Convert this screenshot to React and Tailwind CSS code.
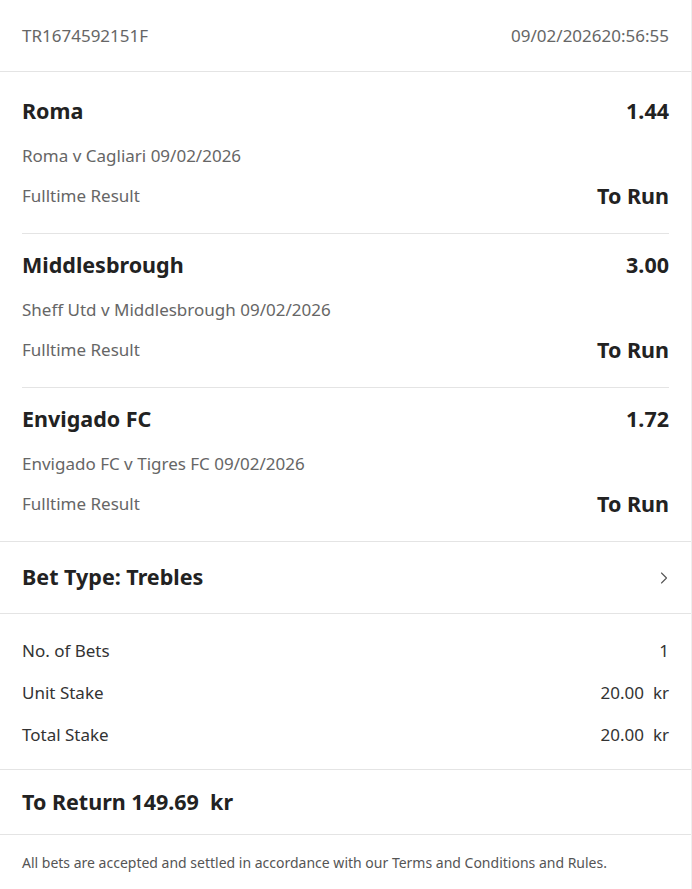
import { ChevronRight } from "lucide-react";

const legs = [
  { team: "Roma", odds: "1.44", event: "Roma v Cagliari 09/02/2026", market: "Fulltime Result", status: "To Run" },
  { team: "Middlesbrough", odds: "3.00", event: "Sheff Utd v Middlesbrough 09/02/2026", market: "Fulltime Result", status: "To Run" },
  { team: "Envigado FC", odds: "1.72", event: "Envigado FC v Tigres FC 09/02/2026", market: "Fulltime Result", status: "To Run" },
];

const stakes = [
  { label: "No. of Bets", value: "1" },
  { label: "Unit Stake", value: "20.00\u00a0 kr" },
  { label: "Total Stake", value: "20.00\u00a0 kr" },
];

export default function App() {
  return (
    <div className="min-h-screen bg-white text-[#222] font-['Noto_Sans',sans-serif] border-r border-[#eee]">
      {/* Header */}
      <div className="flex justify-between items-center h-[72px] px-[22px] border-b border-[#e4e4e4] text-[17px] text-[#666]">
        <span>TR1674592151F</span>
        <span>09/02/202620:56:55</span>
      </div>

      {/* Selections */}
      <div className="px-[22px]">
        {legs.map((l, i) => (
          <div key={l.team} className={`${i === 0 ? "pt-[22px]" : "pt-[14px]"} pb-[17px] ${i < legs.length - 1 ? "border-b border-[#e4e4e4]" : ""}`}>
            <div className="flex justify-between items-center h-[34px] text-[21.5px] font-bold">
              <span>{l.team}</span>
              <span>{l.odds}</span>
            </div>
            <div className="h-[40px] flex items-center mt-[8px] text-[17px] text-[#666]">{l.event}</div>
            <div className="flex justify-between items-center h-[40px] text-[17px]">
              <span className="text-[#666]">{l.market}</span>
              <span className="text-[21.5px] font-bold text-[#222]">{l.status}</span>
            </div>
          </div>
        ))}
      </div>

      {/* Bet type */}
      <div className="flex justify-between items-center h-[73px] px-[22px] border-y border-[#e4e4e4]">
        <span className="text-[21.5px] font-bold">Bet Type: Trebles</span>
        <ChevronRight size={20} strokeWidth={1.3} className="text-[#555] -mr-[5px]" />
      </div>

      {/* Stakes */}
      <div className="px-[22px] pt-[16px] pb-[13px] border-b border-[#e4e4e4]">
        {stakes.map((s) => (
          <div key={s.label} className="flex justify-between items-center h-[42px] text-[17px] text-[#333]">
            <span>{s.label}</span>
            <span>{s.value}</span>
          </div>
        ))}
      </div>

      {/* Return */}
      <div className="flex items-center h-[65px] px-[22px] border-b border-[#e4e4e4] text-[21.5px] font-bold">
        To Return 149.69&nbsp; kr
      </div>

      {/* Footer */}
      <div className="px-[22px] pt-[17px] pb-[20px] text-[14px] text-[#555]">
        All bets are accepted and settled in accordance with our Terms and Conditions and Rules.
      </div>
    </div>
  );
}
